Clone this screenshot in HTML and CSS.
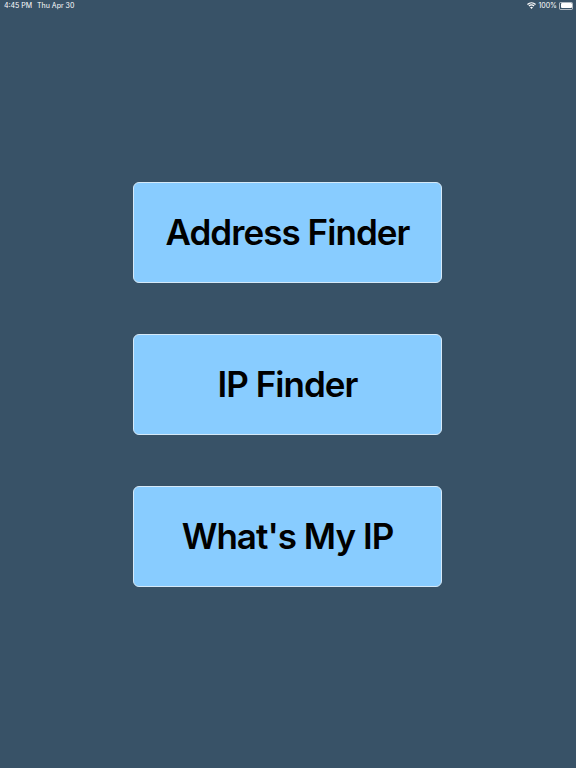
FILE: index.html
```html
<!DOCTYPE html>
<html lang="en">
<head>
    <meta charset="UTF-8">
    <meta name="viewport" content="width=device-width, initial-scale=1.0">
    <title>Network tools</title>
    <link rel="stylesheet" href="styles.css">
</head>
<body>
    <div class="status-bar">
        <div class="status-left">
            <span>4:45 PM</span>
            <span>Thu Apr 30</span>
        </div>
        <div class="status-right">
            <svg class="wifi" width="9" height="7" viewBox="0 0 18 14">
                <path d="M9 14 L6 10.6 A4.6 4.6 0 0 1 12 10.6 Z"/>
                <path d="M4.6 9 L3 7.2 A9 9 0 0 1 15 7.2 L13.4 9 A6.6 6.6 0 0 0 4.6 9 Z"/>
                <path d="M1.8 5.8 L0 3.8 A13.4 13.4 0 0 1 18 3.8 L16.2 5.8 A11 11 0 0 0 1.8 5.8 Z"/>
            </svg>
            <span>100%</span>
            <div class="battery"><div class="battery-fill"></div></div>
        </div>
    </div>
    <div class="menu">
        <button class="menu-button">Address Finder</button>
        <button class="menu-button">IP Finder</button>
        <button class="menu-button">What's My IP</button>
    </div>
</body>
</html>
```

FILE: styles.css
```css
body {
    margin: 0;
    height: 768px;
    overflow: hidden;
    background-color: #385267;
    font-family: Inter, "Liberation Sans", sans-serif;
}
.status-bar {
    display: flex;
    justify-content: space-between;
    align-items: center;
    height: 11px;
    padding: 0 3px 0 4px;
    font-size: 7px;
    color: #fff;
}
.status-left {
    display: flex;
    gap: 5px;
}
.status-right {
    display: flex;
    align-items: center;
    gap: 2px;
}
.wifi {
    fill: #fff;
}
.battery {
    width: 11px;
    height: 5px;
    padding: 0.5px;
    border: 0.5px solid rgba(255,255,255,0.6);
    border-radius: 1.5px;
}
.battery-fill {
    height: 100%;
    background-color: #fff;
    border-radius: 1px;
}
.menu {
    display: flex;
    flex-direction: column;
    align-items: center;
    gap: 51px;
    padding: 171px 1px 0 0;
}
.menu-button {
    width: 309px;
    height: 101px;
    background-color: #88ccff;
    color: #000;
    border: 1px solid #d5e9f8;
    border-radius: 6px;
    font-family: Inter, "Liberation Sans", sans-serif;
    font-size: 35px;
    font-weight: 600;
    letter-spacing: -0.95px;
    padding: 0 0 2px 0;
}
```
